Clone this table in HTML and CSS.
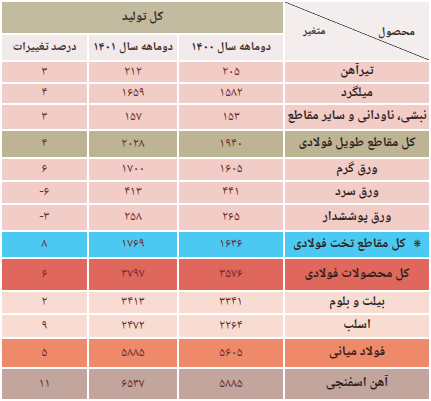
FILE: index.html
```html
<!DOCTYPE html>
<html lang="fa" dir="rtl">
<head>
<meta charset="utf-8">
<title>جدول تولید فولاد</title>
<link rel="stylesheet" href="styles.css">
</head>
<body>
<div class="sheet">
  <div class="cell corner">
    <span class="prod">محصول</span><span class="var">متغیر</span>
  </div>
  <div class="cell head-top">کل تولید</div>
  <div class="cell head-sub">دوماهه سال ۱۴۰۰</div>
  <div class="cell head-sub">دوماهه سال ۱۴۰۱</div>
  <div class="cell head-sub">درصد تغییرات</div>

  <div class="row pink">
    <div class="cell label">تیرآهن</div><div class="cell num">۲۰۵</div><div class="cell num">۲۱۲</div><div class="cell num">۳</div>
  </div>
  <div class="row pink">
    <div class="cell label">میلگرد</div><div class="cell num">۱۵۸۲</div><div class="cell num">۱۶۵۹</div><div class="cell num">۴</div>
  </div>
  <div class="row pink">
    <div class="cell label">نبشی، ناودانی و سایر مقاطع</div><div class="cell num">۱۵۳</div><div class="cell num">۱۵۷</div><div class="cell num">۳</div>
  </div>
  <div class="row tan">
    <div class="cell label">کل مقاطع طویل فولادی</div><div class="cell num">۱۹۴۰</div><div class="cell num">۲۰۲۸</div><div class="cell num">۴</div>
  </div>
  <div class="row pink">
    <div class="cell label">ورق گرم</div><div class="cell num">۱۶۰۵</div><div class="cell num">۱۷۰۰</div><div class="cell num">۶</div>
  </div>
  <div class="row pink">
    <div class="cell label">ورق سرد</div><div class="cell num">۴۴۱</div><div class="cell num">۴۱۳</div><div class="cell num ltr">-۶</div>
  </div>
  <div class="row pink">
    <div class="cell label">ورق پوششدار</div><div class="cell num">۲۶۵</div><div class="cell num">۲۵۸</div><div class="cell num ltr">-۳</div>
  </div>
  <div class="row blue">
    <div class="cell label"><span class="star">❋</span>کل مقاطع تخت فولادی</div><div class="cell num">۱۶۳۶</div><div class="cell num">۱۷۶۹</div><div class="cell num">۸</div>
  </div>
  <div class="row red">
    <div class="cell label">کل محصولات فولادی</div><div class="cell num">۳۵۷۶</div><div class="cell num">۳۷۹۷</div><div class="cell num">۶</div>
  </div>
  <div class="row peach">
    <div class="cell label">بیلت و بلوم</div><div class="cell num">۳۳۴۱</div><div class="cell num">۳۴۱۳</div><div class="cell num">۲</div>
  </div>
  <div class="row peach">
    <div class="cell label">اسلب</div><div class="cell num">۲۲۶۴</div><div class="cell num">۲۴۷۲</div><div class="cell num">۹</div>
  </div>
  <div class="row orange">
    <div class="cell label">فولاد میانی</div><div class="cell num">۵۶۰۵</div><div class="cell num">۵۸۸۵</div><div class="cell num">۵</div>
  </div>
  <div class="row mauve">
    <div class="cell label">آهن اسفنجی</div><div class="cell num">۵۸۸۵</div><div class="cell num">۶۵۳۷</div><div class="cell num">۱۱</div>
  </div>
</div>
</body>
</html>
```
FILE: styles.css
```css
html, body {
  margin: 0;
  padding: 0;
  background: #ffffff;
}
body {
  font-family: "Noto Naskh Arabic", "Noto Sans Arabic", "DejaVu Sans Condensed", "DejaVu Sans", sans-serif;
  font-stretch: condensed;
}
.sheet {
  box-sizing: border-box;
  width: 431px;
  height: 401px;
  padding: 2px;
  display: grid;
  grid-template-columns: 144px 104px 88px 85px;
  grid-template-rows: 31px 25px 20px 19px 24px 26px 21px 21px 25px 25px 31px 21px 22px 28px 30px;
  gap: 2px;
  background: #ffffff;
}
.row {
  display: contents;
}
.cell {
  display: flex;
  align-items: center;
  justify-content: center;
  white-space: nowrap;
  line-height: 1;
}
.corner {
  grid-row: 1 / span 2;
  justify-content: space-between;
  padding: 4px 14px 0 18px;
  background-color: #f4eded;
  background-image: linear-gradient(to top right, transparent calc(50% - 0.7px), #2f2f2f 50%, transparent calc(50% + 0.7px));
  font-size: 12px;
  font-weight: bold;
  color: #3a2a2a;
}
.corner .var {
  margin-top: -4px;
  font-size: 11px;
}
.head-top {
  grid-column: 2 / span 3;
  background: #c3bb9f;
  font-size: 13px;
  font-weight: bold;
  color: #3a2a22;
}
.head-sub {
  background: #f2eaea;
  font-size: 12px;
  font-weight: bold;
  color: #3a2a2a;
}
.label {
  font-size: 13.4px;
  font-weight: bold;
  color: #2e1d1d;
}
.num {
  font-size: 13px;
  letter-spacing: 1.5px;
  color: #6a2c2c;
}
.ltr { direction: ltr; }
.star {
  font-size: 10px;
  margin-left: 8px;
  color: #3a2a2a;
}
.pink > .cell { background: #f2cdc8; }
.tan > .cell { background: #bdb494; }
.blue > .cell { background: #4cc9f3; }
.red > .cell { background: #e0675b; }
.peach > .cell { background: #f9dcd1; }
.orange > .cell { background: #ee8a69; }
.mauve > .cell { background: #c2a59c; }
```
